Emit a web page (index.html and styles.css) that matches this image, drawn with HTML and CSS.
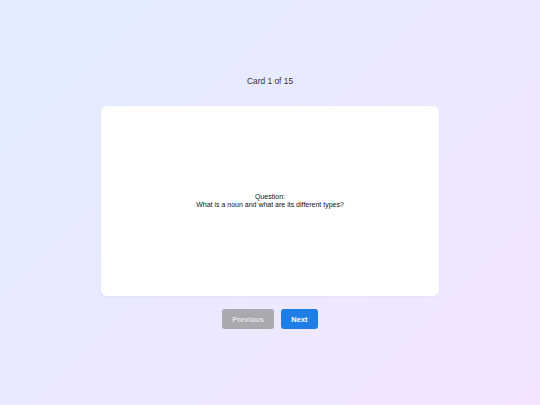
FILE: index.html
```html
<!DOCTYPE html>
<html>
<head>
<meta charset="utf-8">
<link rel="stylesheet" href="styles.css">
</head>
<body>
<div class="page">
  <div class="counter">Card 1 of 15</div>
  <div class="card">
    <div class="card-text">Question:<br>What is a noun and what are its different types?</div>
  </div>
  <div class="controls">
    <button class="btn btn-prev">Previous</button>
    <button class="btn btn-next">Next</button>
  </div>
</div>
</body>
</html>
```
FILE: styles.css
```css
html, body {
  margin: 0;
  padding: 0;
  width: 540px;
  height: 405px;
  overflow: hidden;
}
body {
  background: linear-gradient(135deg, #e1edff 0%, #ebe9ff 50%, #f5e5fe 100%);
  font-family: "Liberation Sans", Arial, sans-serif;
}
.page {
  display: flex;
  flex-direction: column;
  align-items: center;
  padding-top: 76px;
}
.counter {
  font-size: 8.4px;
  line-height: 10px;
  color: #333;
  margin-bottom: 20px;
}
.card {
  width: 338px;
  height: 190px;
  background: #fff;
  border-radius: 6px;
  box-shadow: 0 1px 3px rgba(120, 110, 170, 0.08);
  display: flex;
  align-items: center;
  justify-content: center;
  text-align: center;
}
.card-text {
  font-size: 7px;
  line-height: 8px;
  color: #111;
  margin-top: -1px;
}
.controls {
  display: flex;
  gap: 7px;
  margin-top: 13px;
}
.btn {
  border: none;
  border-radius: 3px;
  height: 20px;
  font-family: "Liberation Sans", Arial, sans-serif;
  font-size: 7.5px;
  font-weight: bold;
  color: #fff;
  padding: 0;
}
.btn-prev {
  width: 52px;
  background: #a9a9af;
  color: #e4e4e8;
}
.btn-next {
  width: 37px;
  background: #1f7ee6;
}
```
